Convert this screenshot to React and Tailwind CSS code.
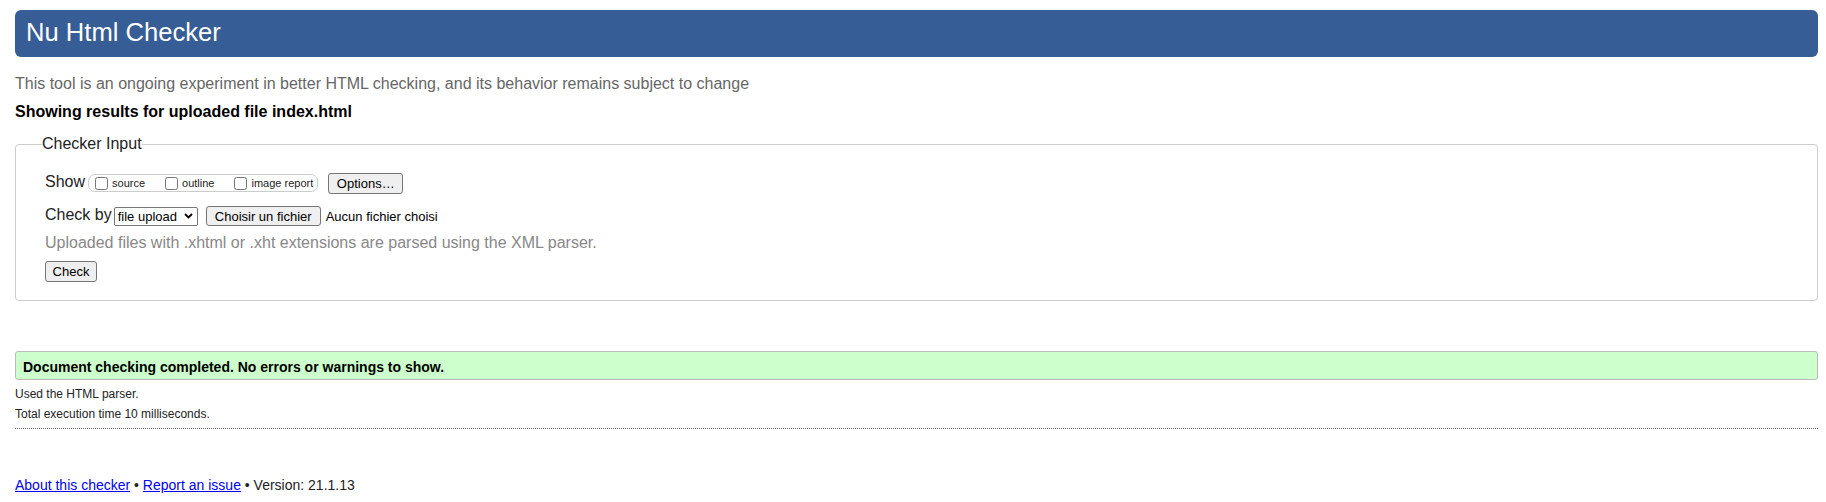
import React from 'react';

const font = { fontFamily: '"Liberation Sans", Arial, sans-serif' };

function Btn({ children, className = '' }) {
  return (
    <button
      type="button"
      className={`flex items-center justify-center bg-[#efefef] border border-[#767676] rounded-[3px] px-[6px] text-[13px] leading-[15px] text-black ${className}`}
    >
      {children}
    </button>
  );
}

function Check({ label }) {
  return (
    <label className="flex items-center">
      <input type="checkbox" className="w-[13px] h-[13px] m-0" />
      <span className="ml-[4px] text-[11px] leading-[13px] text-[#222]">{label}</span>
    </label>
  );
}

export default function App() {
  return (
    <div className="min-h-screen bg-white pl-[15px] pr-[8px] pt-[10px] text-[#222]" style={font}>
      {/* header */}
      <div className="h-[47px] rounded-[6px] bg-[#365d95] pl-[11px] pt-[7px]">
        <h1 className="text-[25.6px] leading-[30px] text-white">Nu Html Checker</h1>
      </div>

      <p className="mt-[18px] text-[16px] leading-[18px] text-[#666]">
        This tool is an ongoing experiment in better HTML checking, and its behavior remains subject to change
      </p>
      <p className="mt-[10px] text-[16px] leading-[18px] font-bold text-black">
        Showing results for uploaded file index.html
      </p>

      {/* checker input */}
      <fieldset className="mt-[14px] border border-[#ccc] rounded-[4px] pl-[26px] pb-[18px]">
        <legend className="text-[16px] leading-[18px] text-[#222]">Checker Input</legend>

        <div className="ml-[3px] mt-[19px] flex items-center h-[22px]">
          <span className="text-[16px] leading-[18px] mt-[-2px]">Show</span>
          <div className="ml-[3px] flex items-center h-[18px] border border-[#ccc] rounded-[7px] pl-[6px] pr-[4px] gap-[20px]">
            <Check label="source" />
            <Check label="outline" />
            <Check label="image report" />
          </div>
          <Btn className="ml-[10px] w-[75px] h-[21px]">Options…</Btn>
        </div>

        <div className="ml-[3px] mt-[11px] flex items-center h-[22px]">
          <span className="text-[16px] leading-[18px] mt-[-2px]">Check by</span>
          <div className="ml-[2px] flex items-center justify-between w-[84px] h-[19px] border border-[#767676] rounded-[2px] bg-white pl-[3px] pr-[4px] text-[13px] leading-[15px] text-black">
            <span>file upload</span>
            <svg width="9" height="6" viewBox="0 0 9 6">
              <path d="M1 1l3.5 3.5L8 1" fill="none" stroke="#000" strokeWidth="1.8" />
            </svg>
          </div>
          <Btn className="ml-[8px] w-[115px] h-[20px]">Choisir un fichier</Btn>
          <span className="ml-[5px] text-[13px] leading-[15px] text-black">Aucun fichier choisi</span>
        </div>

        <p className="ml-[3px] mt-[7px] text-[16px] leading-[18px] text-[#888]">
          Uploaded files with .xhtml or .xht extensions are parsed using the XML parser.
        </p>

        <div className="ml-[3px] mt-[9px]">
          <Btn className="w-[52px] h-[21px]">Check</Btn>
        </div>
      </fieldset>

      {/* result */}
      <div className="mt-[50px] border border-[#bbb] rounded-[3px] bg-[#ccffcc] pl-[7px] pt-[7px] pb-[4px]">
        <p className="text-[14px] leading-[16px] font-bold text-black">
          Document checking completed. No errors or warnings to show.
        </p>
      </div>
      <p className="mt-[7px] text-[12px] leading-[14px] text-[#222]">Used the HTML parser.</p>
      <p className="mt-[6px] text-[12px] leading-[14px] text-[#222]">Total execution time 10 milliseconds.</p>
      <div className="mt-[7px] border-t border-dotted border-[#666]" />

      {/* footer */}
      <p className="mt-[48px] text-[14px] leading-[16px] text-[#222]">
        <a href="#" className="text-[#0000ee] underline">About this checker</a>
        {' • '}
        <a href="#" className="text-[#0000ee] underline">Report an issue</a>
        {' • Version: 21.1.13'}
      </p>
    </div>
  );
}
